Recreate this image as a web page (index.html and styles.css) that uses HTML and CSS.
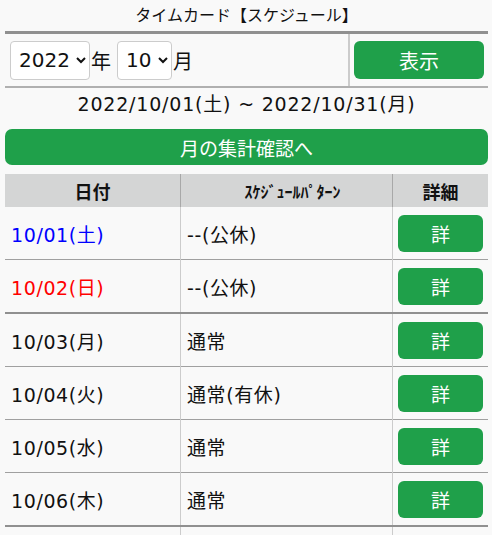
FILE: index.html
```html
<!DOCTYPE html>
<html lang="ja">
<head>
<meta charset="utf-8">
<title>タイムカード【スケジュール】</title>
<link rel="stylesheet" href="styles.css">
</head>
<body>
<div class="page">
  <h1 class="title">タイムカード【スケジュール】</h1>
  <div class="controls">
    <div class="selects">
      <select class="sel sel-year"><option>2022</option></select>
      <span class="unit">年</span>
      <select class="sel sel-month"><option>10</option></select>
      <span class="unit">月</span>
    </div>
    <div class="show-cell">
      <button class="btn btn-show">表示</button>
    </div>
  </div>
  <div class="range">2022/10/01(土) ~ 2022/10/31(月)</div>
  <button class="btn btn-summary">月の集計確認へ</button>
  <table class="sched">
    <thead>
      <tr><th class="c-date">日付</th><th class="c-pat">ｽｹｼﾞｭｰﾙﾊﾟﾀｰﾝ</th><th class="c-det">詳細</th></tr>
    </thead>
    <tbody>
      <tr><td class="sat">10/01(土)</td><td>--(公休)</td><td><button class="btn btn-det">詳</button></td></tr>
      <tr class="week-end"><td class="sun">10/02(日)</td><td>--(公休)</td><td><button class="btn btn-det">詳</button></td></tr>
      <tr><td>10/03(月)</td><td>通常</td><td><button class="btn btn-det">詳</button></td></tr>
      <tr><td>10/04(火)</td><td>通常(有休)</td><td><button class="btn btn-det">詳</button></td></tr>
      <tr><td>10/05(水)</td><td>通常</td><td><button class="btn btn-det">詳</button></td></tr>
      <tr class="week-end"><td>10/06(木)</td><td>通常</td><td><button class="btn btn-det">詳</button></td></tr>
      <tr class="peek"><td></td><td></td><td></td></tr>
    </tbody>
  </table>
</div>
</body>
</html>
```
FILE: styles.css
```css
html, body {
  margin: 0;
  padding: 0;
  background: #f9f9f9;
  color: #111;
  font-family: "DejaVu Sans", "Noto Sans CJK JP", sans-serif;
}
.page {
  margin: 0 4px 0 5px;
}
.title {
  margin: 0;
  height: 31px;
  line-height: 31px;
  font-size: 16px;
  font-weight: normal;
  text-align: center;
  border-bottom: 3px solid #909090;
}
.controls {
  display: flex;
  height: 52px;
  border-bottom: 2px solid #b0b0b0;
}
.selects {
  flex: 1;
  display: flex;
  align-items: center;
  padding-left: 5px;
  border-right: 2px solid #cccccc;
}
.sel {
  height: 39px;
  font-family: inherit;
  font-size: 20px;
  color: #111;
  background: #fff;
  border: 1px solid #cccccc;
  border-radius: 4px;
  padding: 0 0 0 4px;
}
.sel-year { width: 80px; }
.sel-month { width: 55px; }
.unit {
  font-size: 20px;
  margin: 0 6px 0 1px;
}
.show-cell {
  width: 134px;
  display: flex;
  align-items: center;
  justify-content: flex-end;
  padding-right: 4px;
}
.btn {
  border: none;
  background: #1fa04a;
  color: #fff;
  font-family: inherit;
  cursor: pointer;
}
.btn-show {
  width: 130px;
  height: 38px;
  border-radius: 6px;
  font-size: 20px;
}
.range {
  height: 33px;
  line-height: 33px;
  font-size: 19px;
  letter-spacing: 0.8px;
  text-align: center;
}
.btn-summary {
  display: block;
  width: 100%;
  height: 36px;
  margin-top: 8px;
  border-radius: 7px;
  font-size: 19px;
}
.sched {
  width: 100%;
  margin-top: 9px;
  border-collapse: collapse;
  font-size: 19px;
}
.sched th {
  background: #d4d5d5;
  height: 33px;
  padding: 0;
  font-size: 18px;
  font-weight: bold;
  border-left: 1px solid #a8a8a8;
}
.sched th:first-child, .sched td:first-child { border-left: none; }
.sched .c-date { width: 175px; }
.sched .c-pat { width: 211px; font-size: 16px; text-indent: 12px; }
.sched td {
  height: 52px;
  padding: 0 0 0 6px;
  border-left: 1px solid #cccccc;
  border-top: 1px solid #a0a0a0;
  letter-spacing: 0.6px;
}
.sched tbody tr:first-child td { border-top: none; }
.sched td:last-child {
  padding: 0 5px;
  text-align: right;
}
.sched tr.week-end td { border-bottom: 2px solid #909090; }
.sat { color: #0000ff; }
.sun { color: #ff0000; }
.btn-det {
  width: 85px;
  height: 37px;
  border-radius: 6px;
  font-size: 19px;
  vertical-align: middle;
}
```
